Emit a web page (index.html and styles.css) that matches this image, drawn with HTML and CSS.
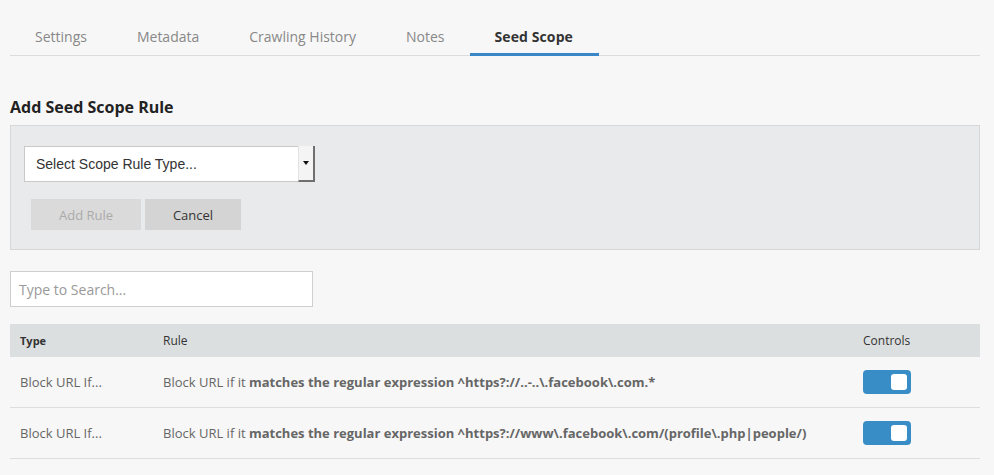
FILE: index.html
```html
<!DOCTYPE html>
<html>
<head>
<meta charset="utf-8">
<link rel="stylesheet" href="styles.css">
</head>
<body>
<div class="page">
  <nav class="tabs">
    <a class="tab">Settings</a>
    <a class="tab">Metadata</a>
    <a class="tab">Crawling History</a>
    <a class="tab">Notes</a>
    <a class="tab active">Seed Scope</a>
  </nav>

  <h2 class="section-title">Add Seed Scope Rule</h2>
  <div class="panel">
    <div class="select">
      <span class="select-label">Select Scope Rule Type...</span>
      <span class="select-btn"><span class="caret"></span></span>
    </div>
    <div class="actions">
      <button class="btn disabled">Add Rule</button>
      <button class="btn">Cancel</button>
    </div>
  </div>

  <div class="search"><span class="placeholder">Type to Search...</span></div>

  <div class="table">
    <div class="row head">
      <div class="c-type"><b>Type</b></div>
      <div class="c-rule">Rule</div>
      <div class="c-ctrl">Controls</div>
    </div>
    <div class="row">
      <div class="c-type">Block URL If...</div>
      <div class="c-rule">Block URL if it <b>matches the regular expression ^https?://..-..\.facebook\.com.*</b></div>
      <div class="c-ctrl"><span class="toggle"><span class="knob"></span></span></div>
    </div>
    <div class="row">
      <div class="c-type">Block URL If...</div>
      <div class="c-rule">Block URL if it <b>matches the regular expression ^https?://www\.facebook\.com/(profile\.php|people/)</b></div>
      <div class="c-ctrl"><span class="toggle"><span class="knob"></span></span></div>
    </div>
  </div>
</div>
</body>
</html>
```

FILE: styles.css
```css
html, body {
  margin: 0;
  padding: 0;
  background: #f7f7f7;
}
body {
  font-family: "Open Sans", "Noto Sans", sans-serif;
  color: #333;
}
.page {
  width: 970px;
  margin-left: 10px;
  padding-top: 11px;
}
.tabs {
  display: flex;
  border-bottom: 1px solid #dcdcdc;
}
.tab {
  font-size: 14px;
  line-height: 20px;
  padding: 16px 25px 6px;
  color: #888;
  border-bottom: 3px solid transparent;
  margin-bottom: -1px;
}
.tab.active {
  color: #333;
  font-weight: 700;
  letter-spacing: 0.1px;
  padding: 16px 26px 6px 25px;
  border-bottom-color: #3a87c8;
}
.section-title {
  font-size: 16px;
  line-height: 22px;
  font-weight: 700;
  margin: 40px 0 7px;
  color: #222;
}
.panel {
  background: #e9eaeb;
  border: 1px solid #d6d7d8;
  padding: 20px 13px 19px;
}
.select {
  width: 291px;
  height: 36px;
  box-sizing: border-box;
  background: #fff;
  border: 1px solid #c9c9c9;
  display: flex;
  align-items: stretch;
}
.select-label {
  flex: 1;
  font-family: "Liberation Sans", Arial, sans-serif;
  font-size: 14px;
  line-height: 34px;
  padding-left: 11px;
  color: #333;
}
.select-btn {
  width: 14px;
  margin: -1px -1px -1px 0;
  background: #f4f4f4;
  border-right: 2px solid #6f6f6f;
  border-bottom: 2px solid #6f6f6f;
  border-left: 1px solid #e3e3e3;
  display: flex;
  align-items: center;
  justify-content: center;
}
.caret {
  width: 0;
  height: 0;
  border-left: 3px solid transparent;
  border-right: 3px solid transparent;
  border-top: 4px solid #111;
}
.actions {
  display: flex;
  gap: 4px;
  margin: 17px 0 0 7px;
}
.btn {
  font-family: "Open Sans", sans-serif;
  font-size: 13px;
  height: 31px;
  border: none;
  background: #d4d4d4;
  color: #333;
  padding: 0;
  width: 96px;
}
.btn.disabled {
  width: 110px;
  background: #dadada;
  color: #aaa;
}
.search {
  margin-top: 21px;
  width: 303px;
  height: 36px;
  box-sizing: border-box;
  background: #fff;
  border: 1px solid #cfcfcf;
  display: flex;
  align-items: center;
  padding-left: 8px;
}
.placeholder {
  font-size: 14px;
  color: #999;
}
.table {
  margin-top: 17px;
}
.row {
  display: flex;
  align-items: center;
  height: 50px;
  border-bottom: 1px solid #dedede;
  font-size: 13px;
  color: #666;
}
.row.head {
  height: 32px;
  background: #dcdfe0;
  border-bottom: 1px solid #dcdfe0;
  font-size: 12px;
  color: #333;
}
.row.head b {
  font-size: 11px;
  font-weight: 700;
}
.row b {
  font-weight: 700;
}
.c-type {
  width: 153px;
  padding-left: 10px;
  box-sizing: border-box;
}
.c-rule {
  flex: 1;
}
.c-ctrl {
  width: 126px;
  padding-left: 9px;
  box-sizing: border-box;
  display: flex;
  align-items: center;
}
.toggle {
  display: flex;
  justify-content: flex-end;
  align-items: center;
  width: 48px;
  height: 24px;
  box-sizing: border-box;
  padding-right: 4px;
  background: #398dc7;
  border-radius: 4px;
}
.knob {
  width: 16px;
  height: 16px;
  background: #fff;
  border-radius: 3px;
}
```
